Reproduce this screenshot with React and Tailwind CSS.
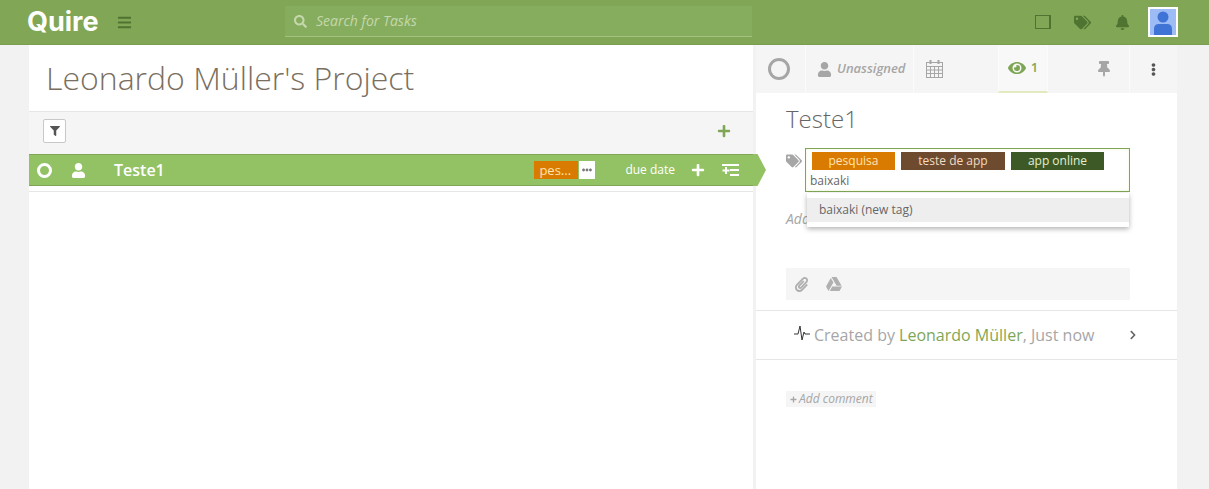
import { FaBars, FaBell, FaChevronRight, FaEllipsisH, FaEllipsisV, FaEye, FaFilter, FaGoogleDrive, FaPaperclip, FaPlus, FaSearch, FaTags, FaThumbtack, FaUser } from "react-icons/fa";

function TopBar() {
  return (
    <header className="h-[45px] shrink-0 bg-[#80a656] flex items-center border-b border-[#789e50]">
      <div className="w-[285px] shrink-0 flex items-center pl-[27px]">
        <span className="font-['Inter',sans-serif] text-[27px] font-bold text-white">Quire</span>
        <FaBars size={15} className="ml-[18px] text-[#4f7331]" />
      </div>
      <div className="w-[467px] h-[31px] mt-[-1px] flex items-center pl-[9px] gap-[9px] bg-[#86ac5d] border-b border-[#a3c27f]">
        <FaSearch size={13} className="text-[#c4d8ac]" />
        <span className="text-sm italic text-[#c4d8ac]">Search for Tasks</span>
      </div>
      <div className="flex-1 flex items-center justify-end pr-[31px]">
        <div className="w-[16px] h-[14px] border border-r-2 border-[#4f7331] mr-[23px]" />
        <FaTags size={17} className="text-[#4f7331] mr-[24px]" />
        <FaBell size={15} className="text-[#4f7331] mr-[18px]" />
        <div className="w-[30px] h-[30px] border-2 border-white bg-[#9dbcf5] flex items-end justify-center overflow-hidden">
          <svg width="20" height="25" viewBox="0 0 20 25" fill="#3f74d6">
            <circle cx="10" cy="7" r="5.5" />
            <path d="M1 25v-6q0-5 5-5h8q5 0 5 5v6z" />
          </svg>
        </div>
      </div>
    </header>
  );
}

function TaskRow() {
  return (
    <div className="relative h-[32px] bg-[#93c265] border-y border-[#7fa656] flex items-center text-white">
      <div className="w-[15px] h-[15px] ml-[8px] rounded-full border-[3px] border-white" />
      <FaUser size={15} className="ml-[19px]" />
      <span className="ml-[28px] text-base font-semibold text-white">Teste1</span>
      <div className="ml-auto flex items-center">
        <span className="w-[44px] h-[18px] bg-[#d97b00] text-[13px] leading-[18px] text-[#ffe3b0] pl-[5px]">pes...</span>
        <span className="w-[16px] h-[18px] ml-[1px] bg-white flex items-center justify-center text-[#777]">
          <FaEllipsisH size={10} />
        </span>
        <span className="ml-[30px] text-xs text-white">due date</span>
        <FaPlus size={14} className="ml-[16px]" />
        <svg className="ml-[17px] mr-[14px]" width="17" height="12" viewBox="0 0 17 12" fill="white">
          <rect x="0" y="0" width="17" height="2" />
          <rect x="8" y="5" width="9" height="2" />
          <rect x="8" y="10" width="9" height="2" />
          <path d="M3 3h2v2.5h2.5v2H5V10H3V7.5H.5v-2H3z" />
        </svg>
      </div>
      <div className="absolute left-full top-[-1px] w-[13px] h-[32px] bg-[#93c265] [clip-path:polygon(0_0,35%_0,100%_50%,35%_100%,0_100%)]" />
    </div>
  );
}

function TaskList() {
  return (
    <main className="w-[724px] shrink-0 bg-white flex flex-col">
      <div className="h-[67px] pl-[17px] flex items-center border-b border-[#e6e6e6]">
        <h1 className="text-[32px] font-light text-[#7a6f5f]">Leonardo Müller's Project</h1>
      </div>
      <div className="h-[42px] bg-[#f5f5f5] flex items-center justify-between pl-[14px] pr-[22px] pb-[4px]">
        <button type="button" className="w-[23px] h-[24px] bg-white border border-[#c8c8c8] rounded-[2px] flex items-center justify-center">
          <FaFilter size={10} className="text-[#555]" />
        </button>
        <FaPlus size={14} className="text-[#7fa656]" />
      </div>
      <TaskRow />
      <div className="h-[6px] border-b border-[#e6e6e6]" />
    </main>
  );
}

function TagEditor() {
  return (
    <div className="relative flex mt-[13px] pl-[30px]">
      <FaTags size={16} className="mt-[5px] text-[#a6a6a6]" />
      <div className="ml-[3px] w-[325px] h-[44px] border border-[#7fa656] bg-white pl-[6px] pt-[3px] shadow-[inset_0_0_3px_#f1f5d0]">
        <div className="flex gap-[6px]">
          <span className="w-[83px] h-[18px] bg-[#d97b00] text-[#ffe3b0] text-xs font-medium leading-[18px] text-center">pesquisa</span>
          <span className="w-[104px] h-[18px] bg-[#6e4a2e] text-[#f2dcc4] text-xs font-medium leading-[18px] text-center">teste de app</span>
          <span className="w-[93px] h-[18px] bg-[#3d5a26] text-[#e3efd2] text-xs font-medium leading-[18px] text-center">app online</span>
        </div>
        <div className="mt-[3px] ml-[-2px] text-xs text-[#666]">baixaki</div>
      </div>
      <div className="absolute left-[51px] top-[45px] w-[322px] h-[34px] bg-white shadow-[0_2px_5px_rgba(0,0,0,0.3)] pt-[5px]">
        <div className="h-[24px] bg-[#eeeeee] pl-[12px] text-xs leading-[24px] text-[#666]">baixaki (new tag)</div>
      </div>
    </div>
  );
}

function TaskDetail() {
  return (
    <aside className="w-[421px] shrink-0 ml-[3px] bg-white flex flex-col">
      <div className="h-[48px] bg-[#f5f5f5] flex">
        <div className="w-[50px] flex items-center pl-[12px] border-r border-[#fbfbfb]">
          <div className="w-[22px] h-[22px] rounded-full border-[3px] border-[#a6a6a6]" />
        </div>
        <div className="w-[108px] flex items-center pl-[11px] gap-[5px] border-r border-[#fbfbfb] text-[#a6a6a6]">
          <FaUser size={15} />
          <span className="text-[13px] font-semibold italic">Unassigned</span>
        </div>
        <div className="w-[84px] flex items-center pl-[12px]">
          <svg width="17" height="18" viewBox="0 0 17 18" fill="none" stroke="#a6a6a6" strokeWidth="1">
            <rect x="0.5" y="2.5" width="16" height="15" />
            <path d="M0 6.5h17M0 10h17M0 13.5h17M4.5 6v12M8.5 6v12M12.5 6v12" />
            <path d="M4.5 0v4M12.5 0v4" strokeWidth="2" />
          </svg>
        </div>
        <div className="w-[50px] flex items-center justify-center gap-[5px] bg-[#f8f8f8] border-x border-[#fbfbfb] border-b-2 border-b-[#e3eac0] text-[#7fa656]">
          <FaEye size={18} />
          <span className="text-[13px] font-semibold">1</span>
        </div>
        <div className="w-[82px] flex items-center justify-center pl-[30px] text-[#a6a6a6] border-r border-[#fbfbfb]">
          <FaThumbtack size={16} />
        </div>
        <div className="flex-1 flex items-center justify-center text-[#555]">
          <FaEllipsisV size={13} />
        </div>
      </div>
      <h2 className="mt-[10px] pl-[30px] text-2xl font-light text-[#666]">Teste1</h2>
      <TagEditor />
      <div className="mt-[17px] pl-[30px] text-sm italic text-[#a6a6a6]">Add</div>
      <div className="mt-[39px] mx-[30px] w-[344px] h-[32px] bg-[#f5f5f5] flex items-center pl-[8px] gap-[17px] text-[#b0b0b0]">
        <FaPaperclip size={15} />
        <FaGoogleDrive size={16} />
      </div>
      <div className="mt-[10px] h-[50px] border-y border-[#e6e6e6] flex items-center pl-[38px] pr-[40px]">
        <svg className="mt-[-5px]" width="17" height="16" viewBox="0 0 17 16" fill="none" stroke="#333" strokeWidth="1">
          <path d="M0 9h4l2-8 2 14 2-8 1 2h5" />
        </svg>
        <span className="ml-[3px] text-base text-[#a6a6a6]">
          Created by <span className="text-[#7fa656]">Leonardo Müller</span>, Just now
        </span>
        <FaChevronRight size={10} className="ml-auto mr-[-1px] text-[#666]" />
      </div>
      <div className="mt-[31px] ml-[30px] w-[90px] h-[16px] bg-[#f5f5f5] flex items-center pl-[4px] gap-[2px] text-[#a6a6a6]">
        <FaPlus size={7} />
        <span className="text-xs italic whitespace-nowrap">Add comment</span>
      </div>
    </aside>
  );
}

export default function App() {
  return (
    <div className="h-[489px] overflow-hidden flex flex-col bg-[#f2f2f2] font-['Open_Sans',sans-serif]">
      <TopBar />
      <div className="flex-1 flex pl-[29px] min-h-0">
        <TaskList />
        <TaskDetail />
      </div>
    </div>
  );
}
